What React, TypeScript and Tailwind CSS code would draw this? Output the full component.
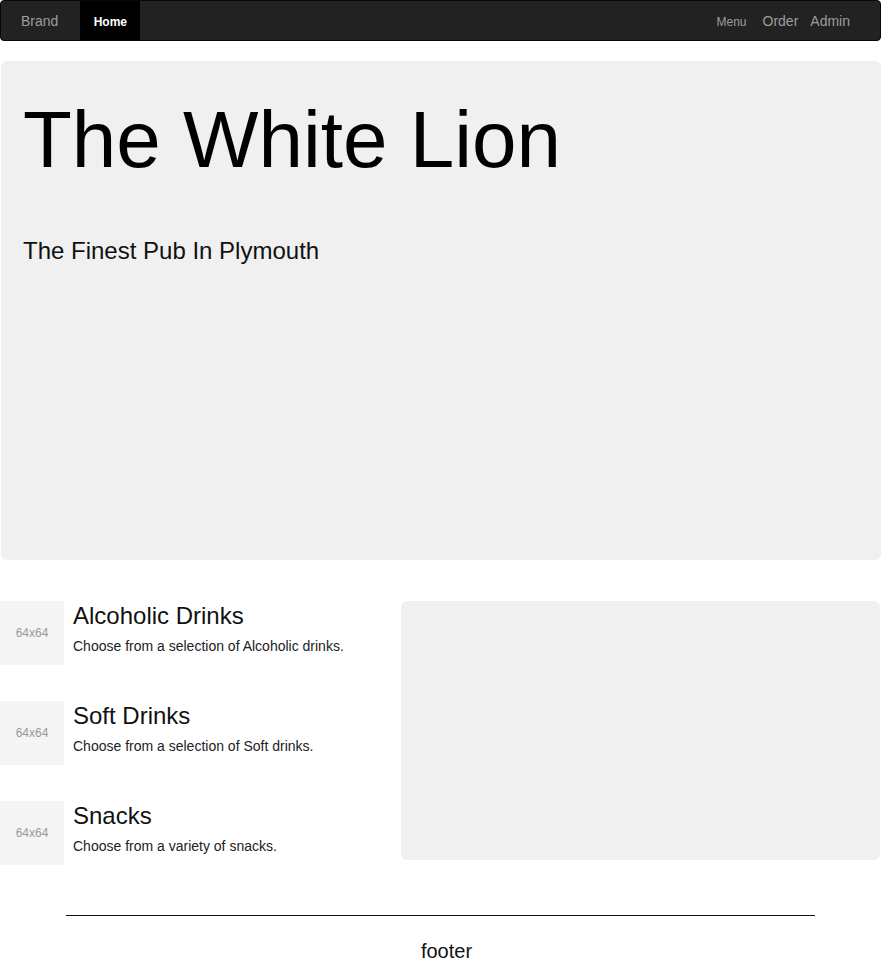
const items = [
  { id: 1, title: 'Alcoholic Drinks', text: 'Choose from a selection of Alcoholic drinks.' },
  { id: 2, title: 'Soft Drinks', text: 'Choose from a selection of Soft drinks.' },
  { id: 3, title: 'Snacks', text: 'Choose from a variety of snacks.' },
];

export default function App() {
  return (
    <div className="min-h-[971px] bg-white font-['Liberation_Sans',Arial,sans-serif] text-[#333]">
      {/* Navbar */}
      <nav className="h-[41px] flex items-stretch bg-[#222] border border-[#080808] rounded-[4px]">
        <a className="pl-[20px] pr-[22px] pt-[2px] flex items-center text-[14px] text-[#9d9d9d]">Brand</a>
        <a className="w-[60px] pt-[2px] flex items-center justify-center bg-black text-white text-[12px] font-bold">Home</a>
        <div className="ml-auto flex items-center pr-[30px] pt-[2px]">
          <a className="text-[12px] text-[#9d9d9d]">Menu</a>
          <a className="ml-[16px] text-[14px] text-[#9d9d9d]">Order</a>
          <a className="ml-[12px] text-[14px] text-[#9d9d9d]">Admin</a>
        </div>
      </nav>

      {/* Hero */}
      <section className="mt-[20px] ml-[1px] h-[499px] bg-[#f0f0f0] rounded-[6px] pt-[35px] pl-[22px]">
        <h1 className="text-[80px] leading-[88px] text-black">The White Lion</h1>
        <p className="mt-[51px] text-[24px] leading-[32px] text-[#111]">The Finest Pub In Plymouth</p>
      </section>

      {/* Content */}
      <div className="mt-[41px] flex">
        <div className="w-[401px] flex flex-col gap-[36px]">
          {items.map((item) => (
            <div key={item.id} className="flex">
              <div className="w-[64px] h-[64px] shrink-0 bg-[#f5f5f5] flex items-center justify-center text-[12px] text-[#999]">
                64x64
              </div>
              <div className="pl-[9px] pt-[2px]">
                <h4 className="text-[24px] leading-[26px] text-[#111]">{item.title}</h4>
                <p className="mt-[7px] text-[14px] leading-[20px] text-[#222]">{item.text}</p>
              </div>
            </div>
          ))}
        </div>
        <div className="w-[479px] h-[259px] bg-[#f0f0f0] rounded-[6px]"></div>
      </div>

      {/* Footer */}
      <footer className="mt-[50px]">
        <hr className="mx-auto w-[749px] border-0 border-t border-[#111]" />
        <p className="mt-[21px] pl-[12px] text-center text-[20px] leading-[28px] text-[#111]">footer</p>
      </footer>
    </div>
  );
}
